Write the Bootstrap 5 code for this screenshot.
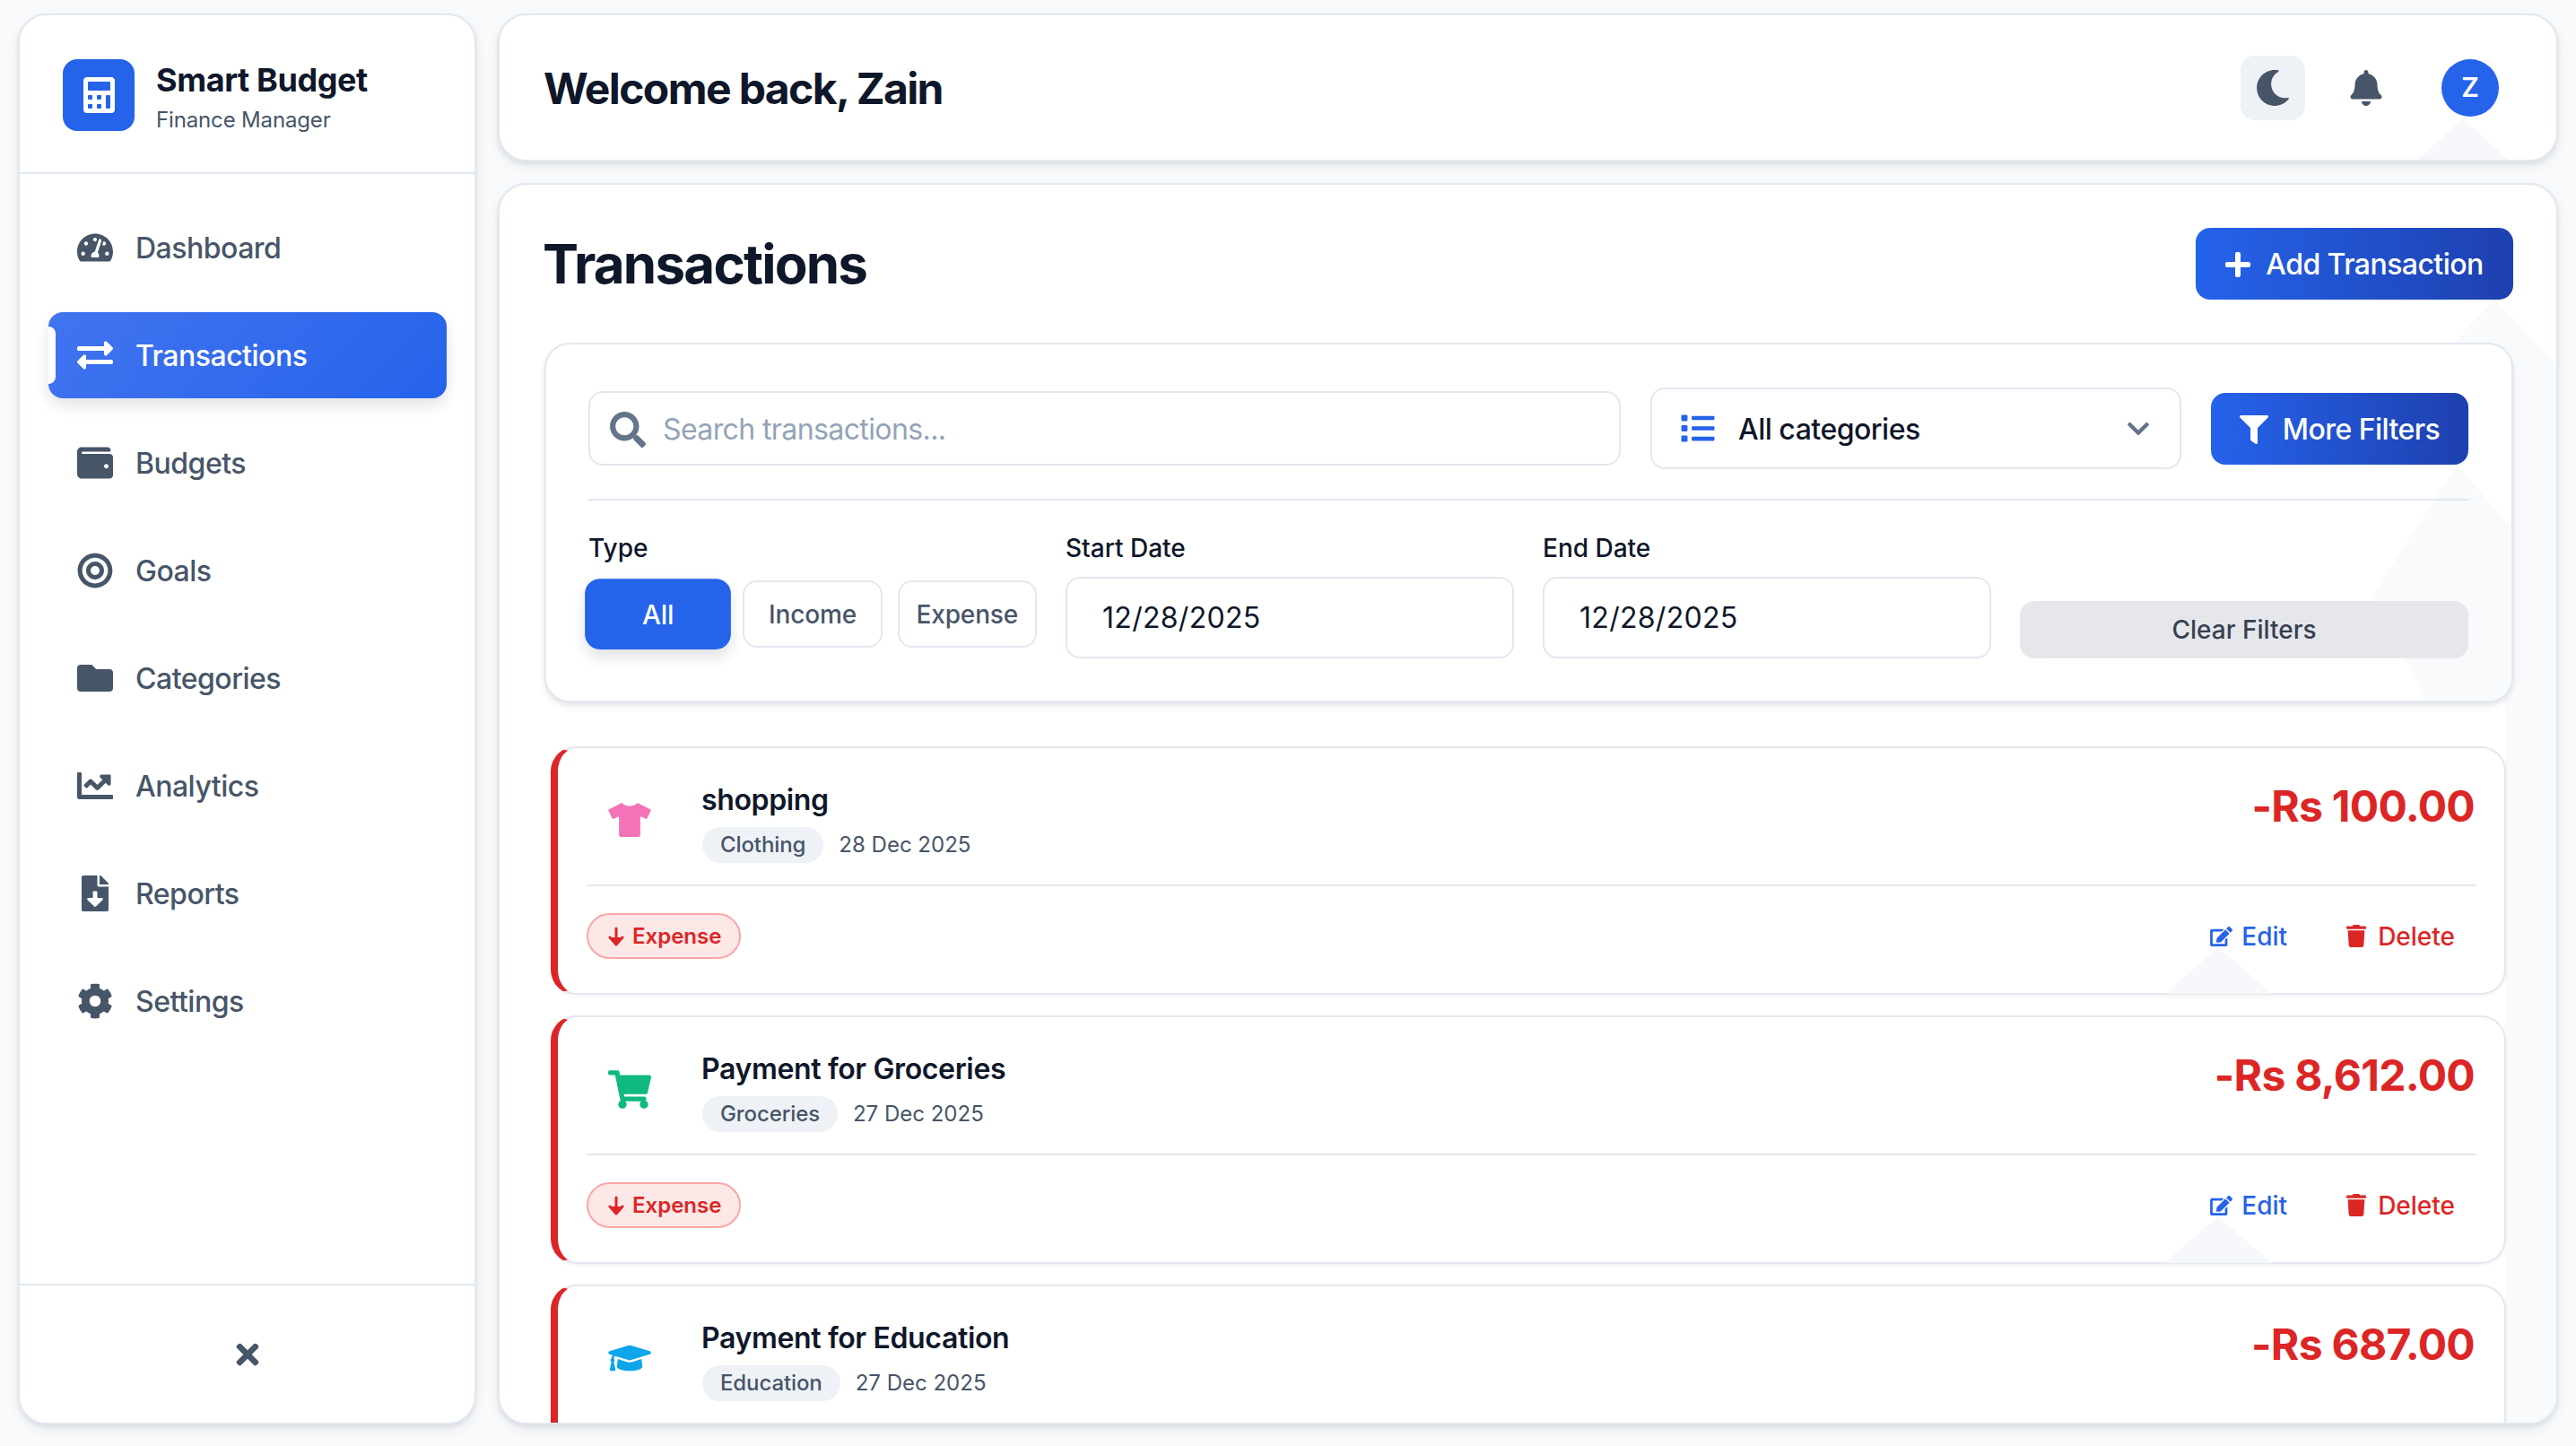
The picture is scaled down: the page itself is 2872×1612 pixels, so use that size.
<!DOCTYPE html>
<html lang="en">
<head>
    <meta charset="UTF-8">
    <meta name="viewport" content="width=device-width, initial-scale=1.0">
    <title>Smart Budget - Transactions</title>
    <link href="https://cdn.jsdelivr.net/npm/bootstrap@5.3.0/dist/css/bootstrap.min.css" rel="stylesheet">
    <style>
        html, body { height: 100%; overflow: hidden; }
        body { background: #f8fafc; font-family: Inter, "Liberation Sans", sans-serif; color: #0f172a; }
        svg { fill: currentColor; display: block; flex: none; }

        .app-shell { height: 100vh; padding: 15px 20px 24px 20px; gap: 24px; }
        .side-panel { width: 511px; flex: none; background: #fff; border: 2px solid #e2e8f0; border-radius: 32px; box-shadow: 0 3px 5px rgba(15, 23, 42, .08), 0 6px 16px rgba(15, 23, 42, .06); }
        .brand-area { padding: 49px 46px 46px 48px; border-bottom: 2px solid #e2e8f0; gap: 24px; }
        .brand-logo { width: 80px; height: 80px; border-radius: 16px; background: #2563eb; color: #fff; }
        .brand-text { height: 80px; }
        .brand-name { font-size: 36px; font-weight: 700; line-height: 46px; letter-spacing: -.4px; }
        .brand-sub { font-size: 24px; line-height: 32px; margin-top: 6px; color: #475569; letter-spacing: -.15px; }
        .side-nav { padding: 34px 31px 0 32px; gap: 24px; }
        .side-link { height: 96px; padding: 2px 0 0 32px; gap: 25px; border-radius: 16px; font-size: 32px; font-weight: 500; letter-spacing: -.5px; color: #475569; position: relative; }
        .side-link:hover { color: #475569; }
        .side-link.on, .side-link.on:hover { color: #fff; background: linear-gradient(135deg, #4274ef, #2563eb); box-shadow: 0 8px 16px rgba(15, 23, 42, .12); }
        .side-link.on::before { content: ""; position: absolute; left: 0; top: 16px; width: 8px; height: 64px; background: #fff; border-radius: 0 8px 8px 0; }
        .side-ico { width: 40px; height: 40px; margin-top: -2px; }
        .side-foot { height: 155px; border-top: 2px solid #e2e8f0; color: #475569; }

        .top-head { height: 165px; flex: none; padding: 0 64px 0 49px; background: #fff; border: 2px solid #e2e8f0; border-radius: 32px; box-shadow: 0 3px 5px rgba(15, 23, 42, .08), 0 6px 16px rgba(15, 23, 42, .06); position: relative; overflow: hidden; }
        .top-head::before { content: ""; position: absolute; left: 2139px; top: 115px; width: 100px; height: 46px; background: #f6f8fb; clip-path: polygon(50% 0, 100% 100%, 0 100%); }
        .top-head > * { position: relative; }
        .head-title { font-size: 48px; font-weight: 700; letter-spacing: -1.6px; margin: 2px 0 0; }
        .head-btn { width: 72px; height: 72px; padding: 0; border: 0; border-radius: 16px; color: #475569; }
        .head-btn.tinted { background: #eef2f7; margin-right: 32px; }
        .avatar-dot { width: 64px; height: 64px; margin-left: 48px; border-radius: 50%; background: #2563eb; color: #fff; font-size: 30px; font-weight: 600; }

        .main-panel { flex: 1; min-height: 0; margin-top: 24px; padding: 48px 48px 0 50px; background: #fff; border: 2px solid #e2e8f0; border-radius: 32px; box-shadow: 0 3px 5px rgba(15, 23, 42, .08), 0 6px 16px rgba(15, 23, 42, .06); overflow: hidden; position: relative; }
        .main-panel::before { content: ""; position: absolute; inset: 0; background: #f8fafc; clip-path: polygon(2225px 128px, 2293px 200px, 2293px 1400px, 2236px 1400px, 2236px 400px, 2175px 180px); }
        .main-panel > * { position: relative; }
        .page-title { font-size: 60px; font-weight: 700; letter-spacing: -1.75px; margin: 0 0 0 -2px; }
        .grad-btn { background: linear-gradient(90deg, #2563eb, #1e40af); color: #fff; border: 0; border-radius: 16px; height: 80px; font-size: 32px; font-weight: 500; letter-spacing: -.55px; gap: 17px; padding: 2px 0 0; }
        .grad-btn:hover { color: #fff; background: linear-gradient(90deg, #2563eb, #1e40af); }
        .add-btn { width: 354px; }
        .more-btn { width: 287px; flex: none; gap: 16px; }

        .filter-box { margin-top: 48px; height: 401px; padding: 48px 48px 0 47px; background: #fff; border: 2px solid #e2e8f0; border-radius: 28px; box-shadow: 0 3px 5px rgba(15, 23, 42, .08), 0 6px 10px rgba(15, 23, 42, .04); position: relative; overflow: hidden; }
        .filter-box::before { content: ""; position: absolute; right: 0; top: 134px; width: 156px; height: 265px; background: #f8fafc; clip-path: polygon(61% 0, 100% 70px, 100% 100%, 40% 100%, 0 56%); }
        .filter-box > * { position: relative; }
        .filter-top { gap: 33px; height: 91px; }
        .search-wrap { height: 83px; }
        .search-wrap .form-control { height: 83px; padding: 2px 0 0 81px; border: 2px solid #e2e8f0; border-radius: 16px; font-size: 32px; letter-spacing: -.6px; color: #0f172a; background: #fff; }
        .search-wrap .form-control::placeholder { color: #94a3b8; }
        .search-ico { position: absolute; left: 24px; top: 23px; width: 40px; height: 40px; color: #64748b; }
        .cat-wrap { width: 592px; flex: none; }
        .cat-wrap .form-select { height: 91px; padding: 2px 0 0 96px; border: 2px solid #e2e8f0; border-radius: 16px; font-size: 32px; font-weight: 500; letter-spacing: -.5px; color: #0f172a; background-image: none; }
        .cat-ico { position: absolute; left: 33px; top: 27px; width: 40px; height: 37px; color: #2563eb; }
        .cat-chev { position: absolute; right: 35px; top: 32px; width: 26px; height: 28px; color: #64748b; }
        .filter-rule { height: 2px; background: #e2e8f0; margin: 33px 0 0; }
        .filter-grid { display: grid; grid-template-columns: repeat(4, 1fr); gap: 32px; align-items: end; padding-top: 34px; }
        .filter-label { font-size: 28px; font-weight: 500; line-height: 38px; margin: 0 0 13px; }
        .filter-label.type-label { margin-bottom: 17px; }
        .type-row { display: grid; grid-template-columns: repeat(3, 1fr); gap: 17px; margin-bottom: 12px; }
        .type-btn { height: 75px; padding: 0; border: 2px solid #e2e8f0; border-radius: 16px; background: #fff; color: #475569; font-size: 28px; font-weight: 500; letter-spacing: -.15px; }
        .type-btn.on, .type-btn.on:hover { background: #2563eb; border-color: #2563eb; color: #fff; transform: scale(1.05); box-shadow: 0 8px 14px rgba(15, 23, 42, .12); }
        .date-field { height: 91px; padding: 0 0 0 39px; border: 2px solid #e2e8f0; border-radius: 16px; font-size: 32px; letter-spacing: .3px; color: #0f172a; }
        .clear-btn { height: 64px; border: 0; border-radius: 16px; background: #e5e7eb; color: #374151; font-size: 28px; font-weight: 500; }

        .tx-list { margin: 49px 8px 0 7px; gap: 23px; }
        .tx-item { height: 277px; flex: none; background: #fff; border: 2px solid #e2e8f0; border-left: 8px solid #dc2626; border-radius: 28px; padding: 32px 31px 0 32px; position: relative; box-shadow: 0 2px 4px rgba(15, 23, 42, .05); }
        .tx-item::before { content: ""; position: absolute; left: 1791px; top: 222px; width: 120px; height: 52px; background: #f6f8fb; clip-path: polygon(50% 0, 100% 100%, 0 100%); }
        .tx-item > * { position: relative; }
        .tx-top { height: 88px; margin-bottom: 32px; }
        .tx-glyph { width: 96px; margin-right: 32px; padding-top: 8px; flex: none; }
        .tx-name { font-size: 32px; font-weight: 600; line-height: 52px; height: 52px; margin-bottom: 4px; letter-spacing: -.35px; }
        .tx-meta { font-size: 24px; color: #475569; gap: 17px; }
        .cat-chip { height: 40px; padding: 0 20px; margin-left: 1px; border-radius: 20px; background: #eef2f7; font-weight: 500; letter-spacing: -.1px; }
        .tx-amount { font-size: 48px; font-weight: 700; color: #dc2626; line-height: 66px; letter-spacing: -.7px; padding-right: 2px; }
        .tx-rule { height: 2px; background: #e2e8f0; margin-bottom: 30px; }
        .kind-pill { height: 51px; padding: 0 20px 0 22px; gap: 9px; border: 2px solid #fca5a5; border-radius: 26px; background: #fde8e8; color: #dc2626; font-size: 24px; font-weight: 600; }
        .act-btn { padding: 0 24px; border: 0; gap: 13px; font-size: 28px; font-weight: 500; }
        .act-btn.blue, .act-btn.blue:hover { color: #2563eb; gap: 10px; }
        .act-btn.red, .act-btn.red:hover { color: #dc2626; }
        .act-row { gap: 18px; }
    </style>
</head>
<body>
    <svg width="0" height="0" class="d-none">
        <symbol id="i-calc" viewBox="0 0 448 512"><path d="M400 0H48C22.400 0 0 22.400 0 48v416c0 25.600 22.400 48 48 48h352c25.600 0 48-22.400 48-48V48c0-25.600-22.400-48-48-48zM128 435c0 6.400-6.400 13-12.800 13H76.800c-6.400 0-12.800-6.600-12.800-13v-38.400c0-6.400 6.400-12.800 12.800-12.800h38.400c6.400 0 12.800 6.400 12.800 12.800V435zm0-128c0 6.400-6.400 12.800-12.800 12.800H76.800c-6.400 0-12.800-6.400-12.800-12.800v-38.400c0-6.400 6.400-12.800 12.800-12.800h38.400c6.400 0 12.800 6.400 12.800 12.800V307zm128 128c0 6.400-6.400 13-12.800 13h-38.400c-6.400 0-12.800-6.600-12.800-13v-38.400c0-6.400 6.400-12.800 12.800-12.800h38.400c6.400 0 12.800 6.400 12.800 12.800V435zm0-128c0 6.400-6.400 12.800-12.800 12.800h-38.400c-6.400 0-12.800-6.400-12.800-12.800v-38.400c0-6.400 6.400-12.800 12.800-12.800h38.400c6.400 0 12.800 6.400 12.800 12.800V307zm128 128c0 6.400-6.400 13-12.800 13h-38.400c-6.400 0-12.800-6.600-12.800-13V268.800c0-6.400 6.400-12.800 12.800-12.800h38.400c6.400 0 12.800 6.400 12.800 12.800V435zm0-256c0 6.400-6.400 12.800-12.800 12.800H76.800c-6.400 0-12.800-6.400-12.800-12.800V76.800C64 70.400 70.400 64 76.800 64h294.400c6.400 0 12.800 6.400 12.800 12.800V179z"/></symbol>
        <symbol id="i-gauge" viewBox="0 0 576 512"><path d="M288 32C128.940 32 0 160.940 0 320c0 52.800 14.250 102.260 39.060 144.800 5.610 9.620 16.300 15.200 27.440 15.200h443c11.140 0 21.830-5.580 27.440-15.200C561.750 422.260 576 372.800 576 320c0-159.060-128.940-288-288-288zm0 64c14.710 0 26.580 10.130 30.320 23.650-1.110 2.260-2.640 4.230-3.450 6.670l-9.220 27.670c-5.130 3.490-10.970 6.010-17.640 6.010-17.670 0-32-14.330-32-32S270.330 96 288 96zM96 384c-17.670 0-32-14.330-32-32s14.330-32 32-32 32 14.330 32 32-14.330 32-32 32zm48-160c-17.670 0-32-14.330-32-32s14.330-32 32-32 32 14.330 32 32-14.330 32-32 32zm246.770-72.410l-61.330 184C343.130 347.330 352 364.540 352 384c0 11.720-3.380 22.550-8.880 32H232.880c-5.500-9.450-8.880-20.280-8.880-32 0-33.940 26.500-61.430 59.900-63.590l61.340-184.010c4.170-12.560 17.730-19.450 30.360-15.170 12.570 4.190 19.350 17.790 15.170 30.360zm14.660 57.200l15.520-46.550c3.470-1.290 7.130-2.230 11.050-2.230 17.670 0 32 14.330 32 32s-14.330 32-32 32c-11.380-.010-20.890-6.280-26.570-15.220zM480 384c-17.670 0-32-14.330-32-32s14.330-32 32-32 32 14.330 32 32-14.330 32-32 32z"/></symbol>
        <symbol id="i-swap" viewBox="0 0 512 512"><path d="M0 168v-16c0-13.255 10.745-24 24-24h360V80c0-21.367 25.899-32.042 40.971-16.971l80 80c9.372 9.373 9.372 24.569 0 33.941l-80 80C409.956 271.982 384 261.456 384 240v-48H24c-13.255 0-24-10.745-24-24zm488 152H128v-48c0-21.314-25.862-32.080-40.971-16.971l-80 80c-9.372 9.373-9.372 24.569 0 33.941l80 80C102.057 463.997 128 453.437 128 432v-48h360c13.255 0 24-10.745 24-24v-16c0-13.255-10.745-24-24-24z"/></symbol>
        <symbol id="i-wallet" viewBox="0 0 512 512"><path d="M461.200 128H80c-8.840 0-16-7.160-16-16s7.160-16 16-16h384c8.840 0 16-7.160 16-16 0-26.510-21.490-48-48-48H64C28.650 32 0 60.650 0 96v320c0 35.350 28.650 64 64 64h397.200c28.020 0 50.800-21.530 50.800-48V176c0-26.470-22.780-48-50.800-48zM416 336c-17.670 0-32-14.330-32-32s14.330-32 32-32 32 14.330 32 32-14.330 32-32 32z"/></symbol>
        <symbol id="i-target" viewBox="0 0 496 512"><path d="M248 8C111.030 8 0 119.030 0 256s111.030 248 248 248 248-111.030 248-248S384.970 8 248 8zm0 432c-101.690 0-184-82.290-184-184 0-101.690 82.290-184 184-184 101.690 0 184 82.290 184 184 0 101.690-82.290 184-184 184zm0-312c-70.690 0-128 57.310-128 128s57.310 128 128 128 128-57.310 128-128-57.310-128-128-128zm0 192c-35.290 0-64-28.710-64-64s28.710-64 64-64 64 28.710 64 64-28.710 64-64 64z"/></symbol>
        <symbol id="i-folder" viewBox="0 0 512 512"><path d="M464 128H272l-64-64H48C21.490 64 0 85.490 0 112v288c0 26.510 21.490 48 48 48h416c26.510 0 48-21.490 48-48V176c0-26.510-21.490-48-48-48z"/></symbol>
        <symbol id="i-chart" viewBox="0 0 512 512"><path d="M496 384H64V80c0-8.840-7.160-16-16-16H16C7.160 64 0 71.160 0 80v336c0 17.670 14.330 32 32 32h464c8.840 0 16-7.160 16-16v-32c0-8.840-7.160-16-16-16zM464 96H345.940c-21.380 0-32.090 25.850-16.970 40.970l32.400 32.400L288 242.750l-73.370-73.370c-12.500-12.500-32.760-12.500-45.250 0l-68.690 68.690c-6.250 6.250-6.250 16.380 0 22.630l22.620 22.620c6.250 6.250 16.380 6.250 22.630 0L192 237.250l73.370 73.370c12.500 12.500 32.760 12.500 45.250 0l96-96 32.400 32.400c15.120 15.120 40.970 4.410 40.970-16.970V112c.010-8.840-7.150-16-15.990-16z"/></symbol>
        <symbol id="i-filedown" viewBox="0 0 384 512"><path d="M224 136V0H24C10.700 0 0 10.700 0 24v464c0 13.300 10.700 24 24 24h336c13.300 0 24-10.700 24-24V160H248c-13.200 0-24-10.800-24-24zm76.450 211.360l-96.420 95.700c-6.650 6.610-17.390 6.610-24.040 0l-96.420-95.700C73.420 337.290 80.540 320 94.820 320H160v-80c0-8.840 7.160-16 16-16h32c8.840 0 16 7.160 16 16v80h65.180c14.280 0 21.400 17.290 11.270 27.360zM377 105L279.100 7c-4.500-4.500-10.600-7-17-7H256v128h128v-6.100c0-6.300-2.500-12.400-7-16.900z"/></symbol>
        <symbol id="i-cog" viewBox="0 0 512 512"><path d="M487.400 315.700l-42.600-24.600c4.300-23.200 4.300-47 0-70.200l42.600-24.600c4.900-2.800 7.100-8.600 5.500-14-11.100-35.600-30-67.800-54.700-94.600-3.800-4.100-10-5.100-14.800-2.300L380.800 110c-17.900-15.400-38.500-27.300-60.800-35.100V25.800c0-5.600-3.900-10.500-9.400-11.700-36.700-8.200-74.300-7.800-109.200 0-5.500 1.200-9.400 6.100-9.400 11.700V75c-22.200 7.900-42.800 19.800-60.800 35.100L88.700 85.500c-4.900-2.800-11-1.900-14.800 2.300-24.700 26.700-43.600 58.900-54.700 94.600-1.700 5.400.6 11.200 5.500 14L67.300 221c-4.300 23.200-4.300 47 0 70.200l-42.600 24.600c-4.900 2.800-7.100 8.600-5.500 14 11.100 35.600 30 67.800 54.700 94.600 3.800 4.100 10 5.100 14.800 2.300l42.600-24.600c17.900 15.400 38.500 27.300 60.800 35.100v49.200c0 5.600 3.900 10.500 9.400 11.700 36.700 8.200 74.300 7.800 109.200 0 5.500-1.200 9.400-6.100 9.400-11.700v-49.200c22.200-7.900 42.800-19.800 60.800-35.100l42.600 24.600c4.900 2.800 11 1.900 14.800-2.300 24.700-26.700 43.600-58.900 54.700-94.600 1.500-5.500-.7-11.300-5.600-14.100zM256 336c-44.100 0-80-35.900-80-80s35.900-80 80-80 80 35.900 80 80-35.900 80-80 80z"/></symbol>
        <symbol id="i-times" viewBox="0 0 352 512"><path d="M242.720 256l100.070-100.070c12.280-12.280 12.280-32.190 0-44.480l-22.240-22.240c-12.280-12.280-32.190-12.280-44.480 0L176 189.280 75.930 89.210c-12.280-12.280-32.190-12.280-44.480 0L9.210 111.450c-12.280 12.280-12.280 32.190 0 44.480L109.280 256 9.210 356.070c-12.280 12.280-12.280 32.190 0 44.480l22.240 22.240c12.280 12.280 32.200 12.280 44.480 0L176 322.720l100.070 100.070c12.280 12.280 32.200 12.280 44.480 0l22.240-22.240c12.280-12.280 12.280-32.190 0-44.480L242.720 256z"/></symbol>
        <symbol id="i-moon" viewBox="0 0 512 512"><path d="M283.211 512c78.962 0 151.079-35.925 198.857-94.792 7.068-8.708-.639-21.430-11.562-19.350-124.203 23.654-238.262-71.576-238.262-196.954 0-72.222 38.662-138.635 101.498-174.394 9.686-5.512 7.250-20.197-3.756-22.230A258.156 258.156 0 0 0 283.211 0c-141.309 0-256 114.511-256 256 0 141.309 114.511 256 256 256z"/></symbol>
        <symbol id="i-bell" viewBox="0 0 448 512"><path d="M224 512c35.320 0 63.970-28.650 63.970-64H160.030c0 35.350 28.650 64 63.970 64zm215.390-149.710c-19.320-20.760-55.470-51.990-55.470-154.290 0-77.700-54.480-139.900-127.940-155.160V32c0-17.670-14.320-32-31.980-32s-31.980 14.330-31.980 32v20.840C118.560 68.100 64.080 130.300 64.080 208c0 102.300-36.150 133.530-55.470 154.290-6 6.450-8.660 14.160-8.610 21.710.11 16.400 12.980 32 32.100 32h383.800c19.120 0 32-15.600 32.100-32 .05-7.550-2.610-15.270-8.610-21.710z"/></symbol>
        <symbol id="i-plus" viewBox="0 0 448 512"><path d="M416 208H272V64c0-17.670-14.330-32-32-32h-32c-17.670 0-32 14.330-32 32v144H32c-17.670 0-32 14.330-32 32v32c0 17.670 14.330 32 32 32h144v144c0 17.670 14.330 32 32 32h32c17.670 0 32-14.330 32-32V304h144c17.670 0 32-14.330 32-32v-32c0-17.670-14.330-32-32-32z"/></symbol>
        <symbol id="i-search" viewBox="0 0 512 512"><path d="M505 442.700L405.300 343c-4.500-4.500-10.600-7-17-7H372c27.600-35.300 44-79.700 44-128C416 93.100 322.900 0 208 0S0 93.100 0 208s93.100 208 208 208c48.300 0 92.700-16.400 128-44v16.300c0 6.400 2.500 12.500 7 17l99.700 99.700c9.400 9.400 24.600 9.400 33.900 0l28.300-28.300c9.400-9.400 9.400-24.600.1-34zM208 336c-70.700 0-128-57.200-128-128 0-70.700 57.200-128 128-128 70.700 0 128 57.200 128 128 0 70.700-57.200 128-128 128z"/></symbol>
        <symbol id="i-list" viewBox="0 0 512 512"><path d="M80 368H16a16 16 0 0 0-16 16v64a16 16 0 0 0 16 16h64a16 16 0 0 0 16-16v-64a16 16 0 0 0-16-16zm0-320H16A16 16 0 0 0 0 64v64a16 16 0 0 0 16 16h64a16 16 0 0 0 16-16V64a16 16 0 0 0-16-16zm0 160H16a16 16 0 0 0-16 16v64a16 16 0 0 0 16 16h64a16 16 0 0 0 16-16v-64a16 16 0 0 0-16-16zm416 176H176a16 16 0 0 0-16 16v32a16 16 0 0 0 16 16h320a16 16 0 0 0 16-16v-32a16 16 0 0 0-16-16zm0-320H176a16 16 0 0 0-16 16v32a16 16 0 0 0 16 16h320a16 16 0 0 0 16-16V80a16 16 0 0 0-16-16zm0 160H176a16 16 0 0 0-16 16v32a16 16 0 0 0 16 16h320a16 16 0 0 0 16-16v-32a16 16 0 0 0-16-16z"/></symbol>
        <symbol id="i-filter" viewBox="0 0 512 512"><path d="M487.976 0H24.028C2.710 0-8.047 25.866 7.058 40.971L192 225.941V432c0 7.831 3.821 15.170 10.237 19.662l80 55.980C298.020 518.690 320 507.493 320 487.980V225.941l184.947-184.970C520.021 25.896 509.338 0 487.976 0z"/></symbol>
        <symbol id="i-chev" viewBox="0 0 448 512"><path d="M207.029 381.476L12.686 187.132c-9.373-9.373-9.373-24.569 0-33.941l22.667-22.667c9.357-9.357 24.522-9.375 33.901-.04L224 284.505l154.745-154.021c9.379-9.335 24.544-9.317 33.901.04l22.667 22.667c9.373 9.373 9.373 24.569 0 33.941L240.971 381.476c-9.373 9.372-24.569 9.372-33.942 0z"/></symbol>
        <symbol id="i-shirt" viewBox="0 0 640 512"><path d="M631.200 96.500L436.500 0C416.400 27.800 371.900 47.200 320 47.200S223.600 27.800 203.500 0L8.800 96.500c-7.900 4-11.100 13.600-7.200 21.500l57.200 114.500c4 7.900 13.600 11.100 21.500 7.200l56.600-27.700c10.600-5.200 23 2.500 23 14.400V480c0 17.700 14.300 32 32 32h256c17.700 0 32-14.300 32-32V226.300c0-11.800 12.400-19.600 23-14.400l56.600 27.700c7.900 4 17.500.8 21.500-7.200L638.300 118c4-7.900.8-17.600-7.100-21.500z"/></symbol>
        <symbol id="i-cart" viewBox="0 0 576 512"><path d="M528.120 301.319l47.273-208C578.806 78.301 567.391 64 551.990 64H159.208l-9.166-44.810C147.758 8.021 137.930 0 126.529 0H24C10.745 0 0 10.745 0 24v16c0 13.255 10.745 24 24 24h69.883l70.248 343.435C147.325 417.100 136 435.222 136 456c0 30.928 25.072 56 56 56s56-25.072 56-56c0-15.674-6.447-29.835-16.824-40h209.647C430.447 426.165 424 440.326 424 456c0 30.928 25.072 56 56 56s56-25.072 56-56c0-22.172-12.888-41.332-31.579-50.405l5.517-24.276c3.413-15.018-8.002-29.319-23.403-29.319H218.117l-6.545-32h293.145c11.206 0 20.920-7.754 23.403-18.681z"/></symbol>
        <symbol id="i-cap" viewBox="0 0 640 512"><path d="M622.340 153.200L343.400 67.500c-15.200-4.670-31.600-4.670-46.790 0L17.660 153.200c-23.540 7.230-23.540 38.360 0 45.590l48.630 14.940c-10.670 13.190-17.230 29.280-17.880 46.900C38.780 266.150 32 276.110 32 288c0 10.780 5.680 19.850 13.860 25.650L20.330 428.530C18.110 438.520 25.710 448 35.940 448h56.110c10.240 0 17.840-9.480 15.620-19.470L82.140 313.650C90.320 307.850 96 298.780 96 288c0-11.570-6.470-21.250-15.660-26.870.76-15.020 8.440-28.300 20.690-36.720L296.600 284.500c9.060 2.780 26.440 6.250 46.790 0l278.950-85.700c23.550-7.240 23.550-38.360 0-45.600zM352.790 315.090c-28.530 8.760-52.840 3.920-65.590 0l-145.020-44.550L128 384c0 35.350 85.960 64 192 64s192-28.650 192-64l-14.180-113.470-145.030 44.560z"/></symbol>
        <symbol id="i-edit" viewBox="0 0 576 512"><path d="M402.600 83.200l90.200 90.200c3.800 3.800 3.800 10 0 13.800L274.400 405.600l-92.800 10.300c-12.400 1.400-22.900-9.100-21.500-21.500l10.300-92.800L388.800 83.200c3.800-3.800 10-3.800 13.800 0zm162-22.900l-48.800-48.800c-15.200-15.200-39.900-15.200-55.200 0l-35.400 35.400c-3.800 3.800-3.800 10 0 13.800l90.200 90.200c3.800 3.800 10 3.800 13.800 0l35.400-35.400c15.200-15.300 15.200-40 0-55.200zM384 346.200V448H64V128h229.800c3.200 0 6.200-1.300 8.500-3.500l40-40c7.600-7.600 2.200-20.500-8.500-20.500H48C21.500 64 0 85.500 0 112v352c0 26.500 21.500 48 48 48h352c26.500 0 48-21.500 48-48V306.200c0-10.700-12.900-16-20.500-8.500l-40 40c-2.200 2.300-3.500 5.300-3.500 8.500z"/></symbol>
        <symbol id="i-trash" viewBox="0 0 448 512"><path d="M432 32H312l-9.400-18.700A24 24 0 0 0 281.100 0H166.800a23.720 23.720 0 0 0-21.400 13.300L136 32H16A16 16 0 0 0 0 48v32a16 16 0 0 0 16 16h416a16 16 0 0 0 16-16V48a16 16 0 0 0-16-16zM53.200 467a48 48 0 0 0 47.900 45h245.800a48 48 0 0 0 47.900-45L416 128H32z"/></symbol>
    </svg>

    <div class="app-shell d-flex">
        <aside class="side-panel d-flex flex-column">
            <div class="brand-area d-flex align-items-start">
                <div class="brand-logo d-flex align-items-center justify-content-center">
                    <svg width="35" height="40"><use href="#i-calc"/></svg>
                </div>
                <div class="brand-text">
                    <div class="brand-name">Smart Budget</div>
                    <div class="brand-sub">Finance Manager</div>
                </div>
            </div>
            <nav class="side-nav nav flex-column flex-grow-1 flex-nowrap">
                <a class="side-link nav-link d-flex align-items-center" href="#"><svg class="side-ico"><use href="#i-gauge"/></svg>Dashboard</a>
                <a class="side-link nav-link on d-flex align-items-center" href="#"><svg class="side-ico"><use href="#i-swap"/></svg>Transactions</a>
                <a class="side-link nav-link d-flex align-items-center" href="#"><svg class="side-ico"><use href="#i-wallet"/></svg>Budgets</a>
                <a class="side-link nav-link d-flex align-items-center" href="#"><svg class="side-ico"><use href="#i-target"/></svg>Goals</a>
                <a class="side-link nav-link d-flex align-items-center" href="#"><svg class="side-ico"><use href="#i-folder"/></svg>Categories</a>
                <a class="side-link nav-link d-flex align-items-center" href="#"><svg class="side-ico"><use href="#i-chart"/></svg>Analytics</a>
                <a class="side-link nav-link d-flex align-items-center" href="#"><svg class="side-ico"><use href="#i-filedown"/></svg>Reports</a>
                <a class="side-link nav-link d-flex align-items-center" href="#"><svg class="side-ico"><use href="#i-cog"/></svg>Settings</a>
            </nav>
            <div class="side-foot d-flex align-items-center justify-content-center">
                <svg width="32" height="36"><use href="#i-times"/></svg>
            </div>
        </aside>

        <div class="d-flex flex-column flex-grow-1" style="min-width: 0">
            <header class="top-head d-flex align-items-center">
                <h1 class="head-title me-auto">Welcome back, Zain</h1>
                <button class="head-btn tinted btn d-flex align-items-center justify-content-center"><svg width="40" height="40"><use href="#i-moon"/></svg></button>
                <button class="head-btn btn d-flex align-items-center justify-content-center"><svg width="36" height="40"><use href="#i-bell"/></svg></button>
                <div class="avatar-dot d-flex align-items-center justify-content-center">Z</div>
            </header>

            <main class="main-panel">
                <div class="d-flex align-items-center justify-content-between">
                    <h2 class="page-title">Transactions</h2>
                    <button class="grad-btn add-btn btn d-flex align-items-center justify-content-center"><svg width="28" height="32"><use href="#i-plus"/></svg>Add Transaction</button>
                </div>

                <section class="filter-box">
                    <div class="filter-top d-flex align-items-center">
                        <div class="search-wrap position-relative flex-grow-1">
                            <svg class="search-ico"><use href="#i-search"/></svg>
                            <input class="form-control" type="text" placeholder="Search transactions...">
                        </div>
                        <div class="cat-wrap position-relative">
                            <select class="form-select"><option>All categories</option></select>
                            <svg class="cat-ico"><use href="#i-list"/></svg>
                            <svg class="cat-chev"><use href="#i-chev"/></svg>
                        </div>
                        <button class="grad-btn more-btn btn d-flex align-items-center justify-content-center"><svg width="32" height="36"><use href="#i-filter"/></svg>More Filters</button>
                    </div>
                    <div class="filter-rule"></div>
                    <div class="filter-grid">
                        <div>
                            <p class="filter-label type-label">Type</p>
                            <div class="type-row">
                                <button class="type-btn on btn">All</button>
                                <button class="type-btn btn">Income</button>
                                <button class="type-btn btn">Expense</button>
                            </div>
                        </div>
                        <div>
                            <label class="filter-label d-block">Start Date</label>
                            <input class="date-field form-control" type="text" value="12/28/2025">
                        </div>
                        <div>
                            <label class="filter-label d-block">End Date</label>
                            <input class="date-field form-control" type="text" value="12/28/2025">
                        </div>
                        <button class="clear-btn btn">Clear Filters</button>
                    </div>
                </section>

                <div class="tx-list d-flex flex-column">
                    <article class="tx-item">
                        <div class="tx-top d-flex">
                            <div class="tx-glyph d-flex justify-content-center align-items-center" style="color: #f472b6"><svg width="48" height="38"><use href="#i-shirt"/></svg></div>
                            <div class="flex-grow-1">
                                <div class="tx-name">shopping</div>
                                <div class="tx-meta d-flex align-items-center"><span class="cat-chip d-flex align-items-center">Clothing</span><span>28 Dec 2025</span></div>
                            </div>
                            <div class="tx-amount">-Rs 100.00</div>
                        </div>
                        <div class="tx-rule"></div>
                        <div class="d-flex align-items-center justify-content-between">
                            <span class="kind-pill d-inline-flex align-items-center"><svg width="18" height="22" viewBox="0 0 18 22" fill="none" stroke="currentColor" stroke-width="3" stroke-linecap="round" stroke-linejoin="round"><path d="M9 2v18M2 12l7 8 7-8"/></svg>Expense</span>
                            <div class="act-row d-flex">
                                <button class="act-btn blue btn d-flex align-items-center"><svg width="25" height="22"><use href="#i-edit"/></svg>Edit</button>
                                <button class="act-btn red btn d-flex align-items-center"><svg width="22" height="25"><use href="#i-trash"/></svg>Delete</button>
                            </div>
                        </div>
                    </article>

                    <article class="tx-item">
                        <div class="tx-top d-flex">
                            <div class="tx-glyph d-flex justify-content-center align-items-center" style="color: #10b981"><svg width="48" height="43"><use href="#i-cart"/></svg></div>
                            <div class="flex-grow-1">
                                <div class="tx-name">Payment for Groceries</div>
                                <div class="tx-meta d-flex align-items-center"><span class="cat-chip d-flex align-items-center">Groceries</span><span>27 Dec 2025</span></div>
                            </div>
                            <div class="tx-amount">-Rs 8,612.00</div>
                        </div>
                        <div class="tx-rule"></div>
                        <div class="d-flex align-items-center justify-content-between">
                            <span class="kind-pill d-inline-flex align-items-center"><svg width="18" height="22" viewBox="0 0 18 22" fill="none" stroke="currentColor" stroke-width="3" stroke-linecap="round" stroke-linejoin="round"><path d="M9 2v18M2 12l7 8 7-8"/></svg>Expense</span>
                            <div class="act-row d-flex">
                                <button class="act-btn blue btn d-flex align-items-center"><svg width="25" height="22"><use href="#i-edit"/></svg>Edit</button>
                                <button class="act-btn red btn d-flex align-items-center"><svg width="22" height="25"><use href="#i-trash"/></svg>Delete</button>
                            </div>
                        </div>
                    </article>

                    <article class="tx-item">
                        <div class="tx-top d-flex">
                            <div class="tx-glyph d-flex justify-content-center align-items-center" style="color: #0ea5e9"><svg width="48" height="38"><use href="#i-cap"/></svg></div>
                            <div class="flex-grow-1">
                                <div class="tx-name">Payment for Education</div>
                                <div class="tx-meta d-flex align-items-center"><span class="cat-chip d-flex align-items-center">Education</span><span>27 Dec 2025</span></div>
                            </div>
                            <div class="tx-amount">-Rs 687.00</div>
                        </div>
                        <div class="tx-rule"></div>
                    </article>
                </div>
            </main>
        </div>
    </div>
    <script src="https://cdn.jsdelivr.net/npm/bootstrap@5.3.0/dist/js/bootstrap.bundle.min.js"></script>
</body>
</html>
